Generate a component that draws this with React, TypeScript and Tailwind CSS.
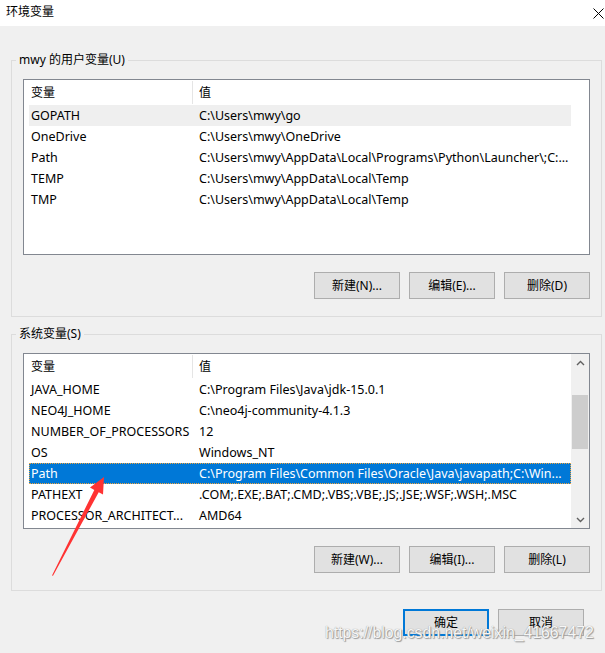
import React from "react";

type Row = { name: string; value: string; sel?: "gray" | "blue" };

const userRows: Row[] = [
  { name: "GOPATH", value: "C:\\Users\\mwy\\go", sel: "gray" },
  { name: "OneDrive", value: "C:\\Users\\mwy\\OneDrive" },
  { name: "Path", value: "C:\\Users\\mwy\\AppData\\Local\\Programs\\Python\\Launcher\\;C:..." },
  { name: "TEMP", value: "C:\\Users\\mwy\\AppData\\Local\\Temp" },
  { name: "TMP", value: "C:\\Users\\mwy\\AppData\\Local\\Temp" },
];

const sysRows: Row[] = [
  { name: "JAVA_HOME", value: "C:\\Program Files\\Java\\jdk-15.0.1" },
  { name: "NEO4J_HOME", value: "C:\\neo4j-community-4.1.3" },
  { name: "NUMBER_OF_PROCESSORS", value: "12" },
  { name: "OS", value: "Windows_NT" },
  { name: "Path", value: "C:\\Program Files\\Common Files\\Oracle\\Java\\javapath;C:\\Win...", sel: "blue" },
  { name: "PATHEXT", value: ".COM;.EXE;.BAT;.CMD;.VBS;.VBE;.JS;.JSE;.WSF;.WSH;.MSC" },
  { name: "PROCESSOR_ARCHITECT...", value: "AMD64" },
];

function Btn({ label, primary }: { label: string; primary?: boolean }) {
  return (
    <div
      className={
        primary
          ? "w-[86px] h-[27px] bg-[#e1e1e1] border-2 border-[#0078d7] flex items-center justify-center text-[12px] text-black"
          : "w-[86px] h-[27px] bg-[#e1e1e1] border border-[#adadad] flex items-center justify-center text-[12px] text-black"
      }
    >
      {label}
    </div>
  );
}

function ListRow({ r }: { r: Row }) {
  const cls =
    r.sel === "blue"
      ? "ml-[5px] h-[21px] flex items-center pt-[1px] border border-dotted border-[#f0a43c] bg-[#0078d7] text-white text-[12.5px]"
      : r.sel === "gray"
      ? "ml-[5px] h-[21px] flex items-center pt-[1px] border border-transparent bg-[#efefef] text-black text-[12.5px]"
      : "ml-[5px] h-[21px] flex items-center pt-[1px] border border-transparent text-black text-[12.5px]";
  return (
    <div className={cls}>
      <div className="w-[162px] pl-[1px] whitespace-nowrap overflow-hidden">{r.name}</div>
      <div className="flex-1 pl-[7px] whitespace-nowrap overflow-hidden">{r.value}</div>
    </div>
  );
}

function Chevron({ up }: { up?: boolean }) {
  return (
    <svg width="9" height="6" viewBox="0 0 9 6">
      <path
        d={up ? "M1 5 L4.5 1.5 L8 5" : "M1 1 L4.5 4.5 L8 1"}
        fill="none"
        stroke="#606060"
        strokeWidth="1.4"
      />
    </svg>
  );
}

function ListView({ rows, scroll }: { rows: Row[]; scroll?: boolean }) {
  return (
    <div className="w-[567px] h-[176px] border border-[#828790] bg-white flex">
      <div className="w-[547px] flex flex-col">
        <div className="h-[25px] flex shrink-0">
          <div className="w-[168px] pl-[7px] flex items-center">变量</div>
          <div className="w-px h-[23px] mt-[1px] bg-[#e5e5e5]" />
          <div className="flex-1 pl-[6px] flex items-center">值</div>
        </div>
        {rows.map((r, i) => (
          <ListRow key={i} r={r} />
        ))}
      </div>
      {scroll ? (
        <div className="w-[18px] bg-[#f0f0f0] flex flex-col">
          <div className="h-[17px] flex items-center justify-center">
            <Chevron up />
          </div>
          <div className="flex-1">
            <div className="mt-[24px] mx-[1px] h-[54px] bg-[#cdcdcd]" />
          </div>
          <div className="h-[17px] flex items-center justify-center">
            <Chevron />
          </div>
        </div>
      ) : (
        <div className="w-[18px] bg-white" />
      )}
    </div>
  );
}

function Group({
  label,
  rows,
  scroll,
  buttons,
}: {
  label: string;
  rows: Row[];
  scroll?: boolean;
  buttons: string[];
}) {
  return (
    <div className="relative ml-[11px] w-[591px] h-[257px] border border-[#dcdcdc] pl-[11px] pt-[18px]">
      <div className="absolute -top-[9px] left-[4px] px-[3px] bg-[#f0f0f0] leading-[16px] text-[12px]">
        {label}
      </div>
      <ListView rows={rows} scroll={scroll} />
      <div className="w-[567px] mt-[17px] flex justify-end gap-[9px]">
        {buttons.map((b) => (
          <Btn key={b} label={b} />
        ))}
      </div>
    </div>
  );
}

export default function App() {
  return (
    <div
      className="relative w-[605px] h-[653px] bg-[#f0f0f0] text-[12px] text-black overflow-hidden"
      style={{ fontFamily: '"Noto Sans", "Noto Sans CJK SC", sans-serif' }}
    >
      <div className="h-[26px] bg-white flex items-center justify-between pl-[6px] pr-[1px] pb-[2px]">
        <span className="text-[12px]">环境变量</span>
        <svg width="11" height="11" viewBox="0 0 11 11" className="mt-[2px]">
          <path d="M0.5 0.5 L10.5 10.5 M10.5 0.5 L0.5 10.5" stroke="#000" strokeWidth="1" />
        </svg>
      </div>

      <div className="mt-[34px]">
        <Group
          label="mwy 的用户变量(U)"
          rows={userRows}
          buttons={["新建(N)...", "编辑(E)...", "删除(D)"]}
        />
      </div>
      <div className="mt-[17px]">
        <Group
          label="系统变量(S)"
          rows={sysRows}
          scroll
          buttons={["新建(W)...", "编辑(I)...", "删除(L)"]}
        />
      </div>

      <div className="mt-[18px] pr-[21px] flex justify-end gap-[9px]">
        <Btn label="确定" primary />
        <Btn label="取消" />
      </div>

      <div
        className="absolute left-[325px] top-[623px] text-[15.8px] leading-[19px] text-[#f6f6f6] whitespace-nowrap [text-shadow:0_0_1px_#8a8a8a,1px_1px_1px_#9a9a9a] pointer-events-none"
        style={{ fontFamily: '"Liberation Sans", Arial, sans-serif' }}
      >
        https://blog.csdn.net/weixin_41667472
      </div>

      <svg
        className="absolute left-0 top-0 pointer-events-none"
        width="605"
        height="653"
        viewBox="0 0 605 653"
      >
        <polygon
          points="52,575.5 94.3,490 90,487.6 104,477 103,494.6 98.7,492.3 53,575.8"
          fill="#ff3333"
        />
      </svg>
    </div>
  );
}
